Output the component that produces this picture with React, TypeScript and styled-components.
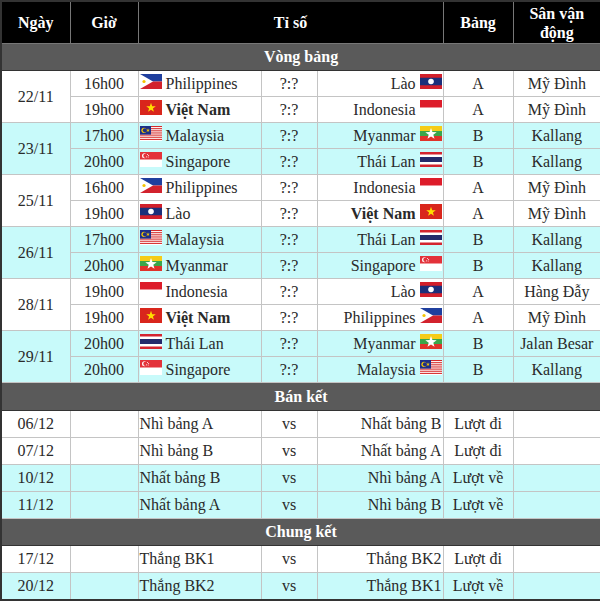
import React from 'react'
import styled, { createGlobalStyle } from 'styled-components'

const GlobalStyle = createGlobalStyle`
  html, body {
    margin: 0;
    padding: 0;
    background: #fff;
  }
  body {
    font-family: "Liberation Serif", "Times New Roman", serif;
  }
`

const Table = styled.table`
  width: 600px;
  border-collapse: collapse;
  table-layout: fixed;
  border: 2px solid #333;
  font-size: 16px;
  color: #2a2a2a;
`

const Head = styled.th`
  background: #000;
  color: #fff;
  font-weight: bold;
  font-size: 16px;
  line-height: 19px;
  height: 41px;
  padding: 0;
  border: 1px solid #777;
  text-align: center;
`

const Section = styled.td<{ $h: number }>`
  background: #5a5a5a;
  color: #fff;
  font-weight: bold;
  text-align: center;
  height: ${p => p.$h}px;
  padding: 0;
  border: 1px solid #333;
`

const Cell = styled.td<{ $shade?: boolean; $h?: number; $align?: string }>`
  background: ${p => (p.$shade ? '#c8fafa' : '#fff')};
  height: ${p => p.$h || 25}px;
  padding: 0 1px;
  border: 1px solid #c4c4c4;
  text-align: ${p => p.$align || 'center'};
  white-space: nowrap;
  overflow: hidden;
`

const Team = styled.div<{ $away?: boolean; $bold?: boolean }>`
  display: flex;
  align-items: center;
  justify-content: ${p => (p.$away ? 'flex-end' : 'flex-start')};
  gap: 4px;
  font-weight: ${p => (p.$bold ? 'bold' : 'normal')};
`

const FlagBox = styled.svg`
  flex: none;
  width: 22px;
  height: 15px;
  margin-bottom: 4px;
`

const star = (cx: number, cy: number, r: number) => {
  const pts: string[] = []
  for (let i = 0; i < 10; i++) {
    const rad = i % 2 === 0 ? r : r * 0.4
    const a = -Math.PI / 2 + (i * Math.PI) / 5
    pts.push(`${(cx + rad * Math.cos(a)).toFixed(2)},${(cy + rad * Math.sin(a)).toFixed(2)}`)
  }
  return pts.join(' ')
}

const Flag = ({ code }: { code: string }) => {
  let body: React.ReactNode = null
  switch (code) {
    case 'PHI':
      body = (
        <>
          <rect width="22" height="7.5" fill="#1f3f9e" />
          <rect y="7.5" width="22" height="7.5" fill="#d2222d" />
          <polygon points="0,0 13,7.5 0,15" fill="#fff" />
          <circle cx="4" cy="7.5" r="1.6" fill="#f5c400" />
        </>
      )
      break
    case 'VIE':
      body = (
        <>
          <rect width="22" height="15" fill="#d9261c" />
          <polygon points={star(11, 7.8, 5)} fill="#ffdd00" />
        </>
      )
      break
    case 'LAO':
      body = (
        <>
          <rect width="22" height="15" fill="#d21f2b" />
          <rect y="3.75" width="22" height="7.5" fill="#1b2f7a" />
          <circle cx="11" cy="7.5" r="2.8" fill="#fff" />
        </>
      )
      break
    case 'INA':
      body = (
        <>
          <rect width="22" height="15" fill="#fff" />
          <rect width="22" height="7.5" fill="#dd1c2a" />
        </>
      )
      break
    case 'MAS':
      body = (
        <>
          <rect width="22" height="15" fill="#fff" />
          {[0, 2, 4, 6, 8, 10, 12].map(i => (
            <rect key={i} y={(i * 15) / 14} width="22" height={15 / 14} fill="#d52b2b" />
          ))}
          <rect width="11" height="8.6" fill="#1c2f87" />
          <circle cx="4" cy="4.3" r="2.6" fill="#f5c800" />
          <circle cx="4.9" cy="4.3" r="2.1" fill="#1c2f87" />
          <polygon points={star(8, 4.3, 2)} fill="#f5c800" />
        </>
      )
      break
    case 'MYA':
      body = (
        <>
          <rect width="22" height="5" fill="#f5cc18" />
          <rect y="5" width="22" height="5" fill="#3aa64a" />
          <rect y="10" width="22" height="5" fill="#e0322a" />
          <polygon points={star(11, 8, 6)} fill="#fff" />
        </>
      )
      break
    case 'SIN':
      body = (
        <>
          <rect width="22" height="15" fill="#fff" />
          <rect width="22" height="7.5" fill="#e3323a" />
          <circle cx="4.5" cy="3.8" r="2.5" fill="#fff" />
          <circle cx="5.5" cy="3.8" r="2.2" fill="#e3323a" />
          <circle cx="7.5" cy="2.4" r="0.5" fill="#fff" />
          <circle cx="8.6" cy="3.6" r="0.5" fill="#fff" />
          <circle cx="6.6" cy="4.8" r="0.5" fill="#fff" />
          <circle cx="8.2" cy="4.9" r="0.5" fill="#fff" />
        </>
      )
      break
    case 'THA':
      body = (
        <>
          <rect width="22" height="15" fill="#fff" />
          <rect width="22" height="2.5" fill="#d3242f" />
          <rect y="12.5" width="22" height="2.5" fill="#d3242f" />
          <rect y="5" width="22" height="5" fill="#242a6b" />
        </>
      )
      break
  }
  return (
    <FlagBox viewBox="0 0 22 15" preserveAspectRatio="none">
      {body}
    </FlagBox>
  )
}

type Match = {
  time: string
  home: string
  hf: string
  away: string
  af: string
  group: string
  venue: string
}

const days: { date: string; matches: Match[] }[] = [
  {
    date: '22/11',
    matches: [
      { time: '16h00', home: 'Philippines', hf: 'PHI', away: 'Lào', af: 'LAO', group: 'A', venue: 'Mỹ Đình' },
      { time: '19h00', home: 'Việt Nam', hf: 'VIE', away: 'Indonesia', af: 'INA', group: 'A', venue: 'Mỹ Đình' }
    ]
  },
  {
    date: '23/11',
    matches: [
      { time: '17h00', home: 'Malaysia', hf: 'MAS', away: 'Myanmar', af: 'MYA', group: 'B', venue: 'Kallang' },
      { time: '20h00', home: 'Singapore', hf: 'SIN', away: 'Thái Lan', af: 'THA', group: 'B', venue: 'Kallang' }
    ]
  },
  {
    date: '25/11',
    matches: [
      { time: '16h00', home: 'Philippines', hf: 'PHI', away: 'Indonesia', af: 'INA', group: 'A', venue: 'Mỹ Đình' },
      { time: '19h00', home: 'Lào', hf: 'LAO', away: 'Việt Nam', af: 'VIE', group: 'A', venue: 'Mỹ Đình' }
    ]
  },
  {
    date: '26/11',
    matches: [
      { time: '17h00', home: 'Malaysia', hf: 'MAS', away: 'Thái Lan', af: 'THA', group: 'B', venue: 'Kallang' },
      { time: '20h00', home: 'Myanmar', hf: 'MYA', away: 'Singapore', af: 'SIN', group: 'B', venue: 'Kallang' }
    ]
  },
  {
    date: '28/11',
    matches: [
      { time: '19h00', home: 'Indonesia', hf: 'INA', away: 'Lào', af: 'LAO', group: 'A', venue: 'Hàng Đẫy' },
      { time: '19h00', home: 'Việt Nam', hf: 'VIE', away: 'Philippines', af: 'PHI', group: 'A', venue: 'Mỹ Đình' }
    ]
  },
  {
    date: '29/11',
    matches: [
      { time: '20h00', home: 'Thái Lan', hf: 'THA', away: 'Myanmar', af: 'MYA', group: 'B', venue: 'Jalan Besar' },
      { time: '20h00', home: 'Singapore', hf: 'SIN', away: 'Malaysia', af: 'MAS', group: 'B', venue: 'Kallang' }
    ]
  }
]

const semis = [
  { date: '06/12', home: 'Nhì bảng A', away: 'Nhất bảng B', leg: 'Lượt đi' },
  { date: '07/12', home: 'Nhì bảng B', away: 'Nhất bảng A', leg: 'Lượt đi' },
  { date: '10/12', home: 'Nhất bảng B', away: 'Nhì bảng A', leg: 'Lượt về' },
  { date: '11/12', home: 'Nhất bảng A', away: 'Nhì bảng B', leg: 'Lượt về' }
]

const finals = [
  { date: '17/12', home: 'Thắng BK1', away: 'Thắng BK2', leg: 'Lượt đi' },
  { date: '20/12', home: 'Thắng BK2', away: 'Thắng BK1', leg: 'Lượt về' }
]

const widths = [69, 68, 123, 56, 126, 70, 88]

const KnockoutRow = ({ r, shade }: { r: { date: string; home: string; away: string; leg: string }; shade: boolean }) => (
  <tr>
    <Cell $shade={shade} $h={26}>{r.date}</Cell>
    <Cell $shade={shade} $h={26} />
    <Cell $shade={shade} $h={26} $align="left">{r.home}</Cell>
    <Cell $shade={shade} $h={26}>vs</Cell>
    <Cell $shade={shade} $h={26} $align="right">{r.away}</Cell>
    <Cell $shade={shade} $h={26}>{r.leg}</Cell>
    <Cell $shade={shade} $h={26} />
  </tr>
)

export default function App() {
  return (
    <>
      <GlobalStyle />
      <Table>
        <colgroup>
          {widths.map((w, i) => (
            <col key={i} style={{ width: w }} />
          ))}
        </colgroup>
        <thead>
          <tr>
            <Head>Ngày</Head>
            <Head>Giờ</Head>
            <Head colSpan={3}>Tỉ số</Head>
            <Head>Bảng</Head>
            <Head>
              Sân vận
              <br />
              động
            </Head>
          </tr>
        </thead>
        <tbody>
          <tr>
            <Section colSpan={7} $h={26}>Vòng bảng</Section>
          </tr>
          {days.map((d, di) =>
            d.matches.map((m, mi) => {
              const shade = di % 2 === 1
              return (
                <tr key={`${di}-${mi}`}>
                  {mi === 0 && (
                    <Cell rowSpan={2} $shade={shade}>
                      {d.date}
                    </Cell>
                  )}
                  <Cell $shade={shade}>{m.time}</Cell>
                  <Cell $shade={shade}>
                    <Team $bold={m.home === 'Việt Nam'}>
                      <Flag code={m.hf} />
                      {m.home}
                    </Team>
                  </Cell>
                  <Cell $shade={shade}>?:?</Cell>
                  <Cell $shade={shade}>
                    <Team $away $bold={m.away === 'Việt Nam'}>
                      {m.away}
                      <Flag code={m.af} />
                    </Team>
                  </Cell>
                  <Cell $shade={shade}>{m.group}</Cell>
                  <Cell $shade={shade}>{m.venue}</Cell>
                </tr>
              )
            })
          )}
          <tr>
            <Section colSpan={7} $h={27}>Bán kết</Section>
          </tr>
          {semis.map((r, i) => (
            <KnockoutRow key={r.date} r={r} shade={i >= 2} />
          ))}
          <tr>
            <Section colSpan={7} $h={26}>Chung kết</Section>
          </tr>
          {finals.map((r, i) => (
            <KnockoutRow key={r.date} r={r} shade={i === 1} />
          ))}
        </tbody>
      </Table>
    </>
  )
}
